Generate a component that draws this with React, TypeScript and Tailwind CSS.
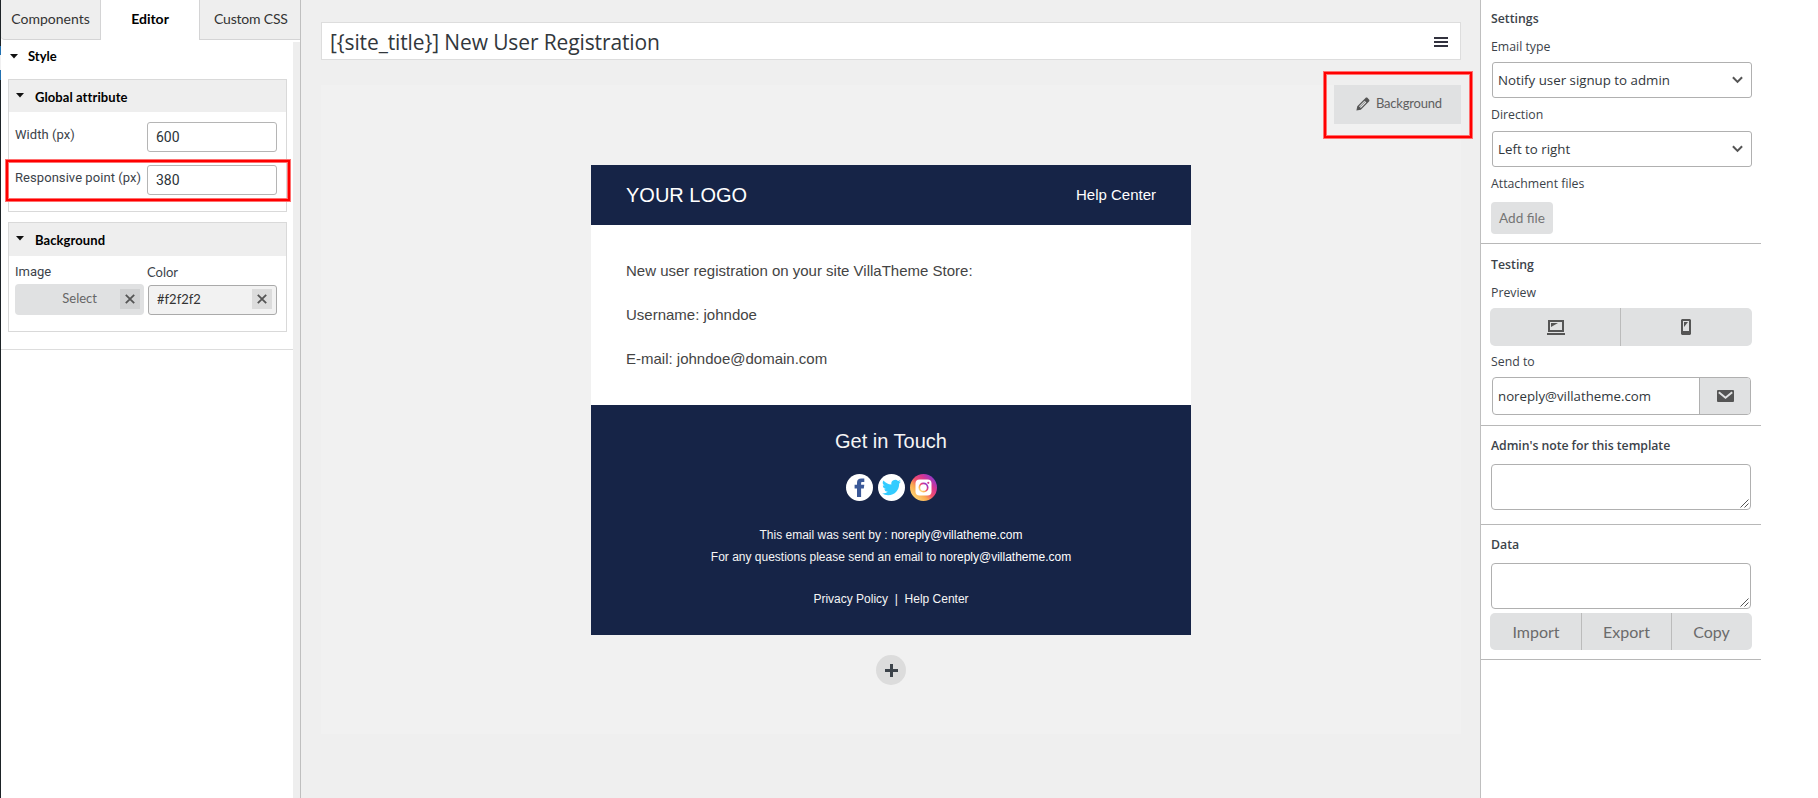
import React from 'react';

const lato = "font-['Lato',sans-serif]";
const roboto = "font-['Roboto',sans-serif]";
const sego = "font-['Open_Sans','Noto_Sans',sans-serif]";

function Caret() {
  return (
    <svg width="8" height="5" viewBox="0 0 8 5" className="shrink-0">
      <path d="M0 0h8L4 4.5z" fill="#111" />
    </svg>
  );
}

function Cross({ className }: { className: string }) {
  return (
    <span className={`flex size-5 items-center justify-center ${className}`}>
      <svg width="10" height="10" viewBox="0 0 10 10">
        <path d="M0.8 0.8L9.2 9.2M9.2 0.8L0.8 9.2" stroke="#555" strokeWidth="1.8" fill="none" />
      </svg>
    </span>
  );
}

function PanelHeading({ title, className }: { title: string; className: string }) {
  return (
    <div className={`flex bg-[#eee] pl-[7px] ${className}`}>
      <span className="mt-[13px] mr-[11px] flex">
        <Caret />
      </span>
      <span className="pt-[1px] text-[13px] leading-8 font-bold tracking-[0.08px] text-black">{title}</span>
    </div>
  );
}

function NumberField({ label, value }: { label: string; value: string }) {
  return (
    <div className={`flex h-[43px] justify-between pr-[9px] pl-1.5 text-[#3c434a] ${roboto}`}>
      <span className="text-[13px] leading-[26px] tracking-[0.06px]">{label}</span>
      <span className="flex h-[30px] w-[130px] items-center rounded-[3px] border border-[#b5b5b5] bg-white pl-[8px] text-[14px] text-[#2c3338]">
        {value}
      </span>
    </div>
  );
}

function Sidebar() {
  return (
    <aside className={`flex h-full w-[301px] border-r border-[#bfbfbf] bg-white ${lato}`}>
      <div className="flex w-px shrink-0 flex-col bg-[#1d2327]">
        <div className="mt-[46px] h-[9px] bg-[#2271b1]" />
        <div className="h-[15px] bg-[#f0f0f1]" />
        <div className="h-[10px] bg-[#2271b1]" />
      </div>
      <div className="flex w-[299px] flex-col">
        <nav className="flex h-10 text-[14px] leading-[38px] text-[#333]">
          <span className="w-[100px] rounded-bl-[4px] border-r border-b border-[#d4d4d5] bg-[#eee] text-center">Components</span>
          <span className="w-[98px] bg-white text-center font-bold text-black">Editor</span>
          <span className="w-[101px] border-b border-l border-[#d4d4d5] bg-[#eee] pl-[14px] tracking-[-0.2px]">Custom CSS</span>
        </nav>
        <div className="flex flex-1">
          <div className="flex w-[292px] flex-col">
            <div className="flex h-[310px] flex-col border-b border-[#ddd] pl-[7px]">
              <div className="flex h-[39px] items-center gap-[10px] pb-[7px] pl-[2px]">
                <Caret />
                <span className="pt-[2px] text-[13px] font-bold text-black">Style</span>
              </div>
              <section className="h-[133px] w-[279px] border border-[#d9d9d9]">
                <PanelHeading title="Global attribute" className="h-8" />
                <div className="pt-[10px]">
                  <NumberField label="Width (px)" value="600" />
                  <NumberField label="Responsive point (px)" value="380" />
                </div>
              </section>
              <section className="mt-[10px] h-[110px] w-[279px] border border-[#d9d9d9]">
                <PanelHeading title="Background" className="h-[33px]" />
                <div className="flex h-7 pt-[6px] pl-1.5 text-[13px] leading-5 text-[#3c434a]">
                  <span className={`w-[132px] ${roboto}`}>Image</span>
                  <span>Color</span>
                </div>
                <div className="flex gap-1 pl-1.5 text-[13px]">
                  <span className="flex h-[31px] w-[129px] items-center justify-end rounded-[4px] bg-[#e0e1e2] pr-1 pb-px text-[#666]">
                    <span className="mr-[23px] pb-px">Select</span>
                    <Cross className="bg-[#d0d1d2]" />
                  </span>
                  <span className="mt-px flex h-[30px] w-[129px] items-center justify-between rounded-[3px] border border-[#aaa] bg-[#f2f2f2] pr-1 pb-[2px] pl-2 text-[#333]">
                    <span className="pt-[2px]">#f2f2f2</span>
                    <Cross className="bg-[#dcdcdc]" />
                  </span>
                </div>
              </section>
            </div>
          </div>
          <div className="mt-[2px] flex-1 bg-[#eee]" />
        </div>
      </div>
    </aside>
  );
}

function SocialIcons() {
  return (
    <div className="flex justify-center gap-[5px]">
      <svg width="27" height="27" viewBox="0 0 27 27">
        <circle cx="13.5" cy="13.5" r="13.5" fill="#fff" />
        <path d="M11 23V14.4H8.6v-3.6H11V8.7c0-2.9 1.7-4.2 4.3-4.2h3v3.4h-1.9c-1 0-1.3.5-1.3 1.4v1.5h3.2l-.5 3.6h-2.7V23z" fill="#3b5998" />
      </svg>
      <svg width="27" height="27" viewBox="0 0 27 27">
        <circle cx="13.5" cy="13.5" r="13.5" fill="#fff" />
        <path transform="translate(4.1 4) scale(.79)" d="M23.95 4.57a10 10 0 0 1-2.82.77 4.96 4.96 0 0 0 2.16-2.72c-.95.55-2 .95-3.13 1.18a4.92 4.92 0 0 0-8.38 4.48C7.69 8.1 4.07 6.13 1.64 3.16a4.92 4.92 0 0 0 1.52 6.57 4.9 4.9 0 0 1-2.23-.61v.06a4.92 4.92 0 0 0 3.95 4.83 5 5 0 0 1-2.21.08 4.94 4.94 0 0 0 4.6 3.42A9.87 9.87 0 0 1 0 19.54a13.99 13.99 0 0 0 7.56 2.21c9.05 0 14-7.5 14-13.98 0-.21 0-.42-.02-.63a9.94 9.94 0 0 0 2.41-2.57z" fill="#33ccff" />
      </svg>
      <svg width="27" height="27" viewBox="0 0 27 27">
        <defs>
          <linearGradient id="insta" x1="0.1" y1="0.85" x2="0.85" y2="0.1">
            <stop offset="0" stopColor="#ffd776" />
            <stop offset="0.3" stopColor="#f9a94f" />
            <stop offset="0.5" stopColor="#f0506e" />
            <stop offset="0.75" stopColor="#d53692" />
            <stop offset="1" stopColor="#8f39ce" />
          </linearGradient>
        </defs>
        <circle cx="13.5" cy="13.5" r="13.5" fill="url(#insta)" />
        <rect x="5.5" y="5.5" width="16" height="16" rx="4" fill="#fff" />
        <circle cx="13.5" cy="13.5" r="4.2" fill="none" stroke="url(#insta)" strokeWidth="1.7" />
        <circle cx="18.3" cy="8.8" r="1.1" fill="#d53692" />
      </svg>
    </div>
  );
}

function EmailPreview() {
  return (
    <article className="mt-[41px] flex w-[600px] flex-col font-['Liberation_Sans',Arial,sans-serif]">
      <header className="flex h-[60px] items-center justify-between bg-[#162447] px-[35px] text-white">
        <span className="text-[20px]">YOUR LOGO</span>
        <span className="text-[15px]">Help Center</span>
      </header>
      <div className="flex h-[180px] flex-col bg-white px-[35px] pt-6 text-[15px] leading-[44px] text-[#444]">
        <p>New user registration on your site VillaTheme Store:</p>
        <p>Username: johndoe</p>
        <p>E-mail: johndoe@domain.com</p>
      </div>
      <footer className="h-[230px] bg-[#162447] text-center text-[#f5f5f5]">
        <h2 className="pt-[21px] pb-[18px] text-[20px] leading-[30px]">Get in Touch</h2>
        <SocialIcons />
        <p className="pt-[23px] text-[12px] leading-[22px]">
          This email was sent by : <span className="text-white">noreply@villatheme.com</span>
        </p>
        <p className="text-[12px] leading-[22px]">
          For any questions please send an email to <span className="text-white">noreply@villatheme.com</span>
        </p>
        <p className="pt-[20px] text-[12px] leading-[22px] whitespace-pre">{'Privacy Policy  |  Help Center'}</p>
      </footer>
    </article>
  );
}

function Canvas() {
  return (
    <main className="flex h-full w-[1179px] flex-col bg-[#efefef] px-5 pt-[22px]">
      <div className={`flex h-[38px] w-[1140px] items-center justify-between border border-[#ddd] bg-white pt-[2px] pr-3 pl-[8px] ${sego}`}>
        <span className="text-[21px] leading-9 tracking-[-0.12px] text-[#32373c]">[{'{site_title}'}] New User Registration</span>
        <span className="flex w-[14px] flex-col gap-[2px]">
          <span className="h-[2px] bg-[#32323e]" />
          <span className="h-[2px] bg-[#32323e]" />
          <span className="h-[2px] bg-[#32323e]" />
        </span>
      </div>
      <div className="mt-[25px] flex h-[649px] w-[1140px] flex-col items-center bg-[#f1f1f1]">
        <div className={`flex h-[39px] w-[127px] items-center gap-[6px] self-end bg-[#e0e1e2] pb-[2px] pl-[22px] text-[13px] tracking-[-0.2px] text-[#5f5f5f] ${lato}`}>
          <svg width="14" height="14" viewBox="0 0 14 14">
            <path d="M0.4 13.6L1.3 9.2L9.5 1C10.1.4 11 .4 11.6 1L13 2.4C13.6 3 13.6 3.9 13 4.5L4.8 12.7z" fill="#555" />
            <path d="M3 9.2L8.5 3.7L10.3 5.5L4.8 11z" fill="#e0e1e2" />
            <path d="M3.6 10.2L9 4.8" stroke="#555" strokeWidth=".6" />
          </svg>
          <span className="pt-px">Background</span>
        </div>
        <EmailPreview />
        <span className="mt-5 flex size-[30px] items-center justify-center rounded-full bg-[#dcdcdc]">
          <svg width="13" height="13" viewBox="0 0 13 13">
            <path d="M5 0h3v5h5v3H8v5H5V8H0V5h5z" fill="#3c434a" />
          </svg>
        </span>
      </div>
    </main>
  );
}

function SelectBox({ value }: { value: string }) {
  return (
    <div className="ml-[1px] flex h-9 w-[260px] items-center justify-between rounded-[3px] border border-[#b0b0b0] bg-white pr-2 pl-[5px] text-[13.3px] text-[#32373c]">
      <span className="pt-px">{value}</span>
      <svg width="11" height="8" viewBox="0 0 11 8">
        <path d="M0.9 1.2L5.5 5.9L10.1 1.2" fill="none" stroke="#555" strokeWidth="2" />
      </svg>
    </div>
  );
}

function NoteArea() {
  return (
    <div className="flex h-[46px] w-[260px] items-end justify-end rounded-[4px] border border-[#b0b0b0] bg-white p-px">
      <svg width="9" height="9" viewBox="0 0 9 9">
        <path d="M0.5 8.5L8.5 0.5M4.5 8.5L8.5 4.5" stroke="#555" strokeWidth="1" fill="none" />
      </svg>
    </div>
  );
}

function SettingsPanel() {
  return (
    <aside className={`flex h-full w-[338px] flex-col border-l border-[#bfbfbf] bg-white text-[12.3px] text-[#3c434a] ${sego}`}>
      <section className="h-[244px] w-[280px] border-b border-[#b8b8b8] pl-[10px]">
        <h3 className="pt-[9px] leading-5 font-semibold">Settings</h3>
        <div className="mt-[8px] mb-[5px] leading-5">Email type</div>
        <SelectBox value="Notify user signup to admin" />
        <div className="mt-[7px] mb-[6px] leading-5">Direction</div>
        <SelectBox value="Left to right" />
        <div className="mt-[7px] mb-[8px] leading-5">Attachment files</div>
        <div className={`flex h-8 w-[62px] items-center justify-center rounded-[4px] bg-[#e0e1e2] text-[13.6px] text-[#757575] ${lato}`}>Add file</div>
      </section>
      <section className="mt-px h-[181px] w-[280px] border-b border-[#b8b8b8] pl-[10px]">
        <h3 className="pt-[10px] leading-5 font-semibold">Testing</h3>
        <div className="mt-[8px] mb-[5px] leading-5">Preview</div>
        <div className="-ml-px flex h-[38px] w-[262px] rounded-[5px] bg-[#e0e1e2]">
          <span className="flex w-[131px] items-center justify-center border-r border-[#bbb] pl-[2px]">
            <svg width="18" height="15" viewBox="0 0 18 15">
              <rect x="2" y="1" width="14" height="10" fill="none" stroke="#555" strokeWidth="2" />
              <path d="M4 3h7L4 7z" fill="#555" />
              <rect x="0" y="13" width="18" height="2" fill="#555" />
            </svg>
          </span>
          <span className="flex flex-1 items-center justify-center pr-[1px]">
            <svg width="10" height="16" viewBox="0 0 10 16">
              <path fillRule="evenodd" d="M1 0h8l1 1v14l-1 1H1l-1-1V1zM2 2v10h6V2z" fill="#555" />
              <path d="M3 3h4L3 8z" fill="#555" />
            </svg>
          </span>
        </div>
        <div className="mt-[6px] mb-[5px] leading-5">Send to</div>
        <div className="ml-px flex h-[38px] w-[259px] overflow-hidden rounded-[4px] border border-[#b0b0b0]">
          <span className="flex w-[207px] items-center border-r border-[#b0b0b0] pt-px pl-[5px] text-[13.25px] text-[#32373c]">noreply@villatheme.com</span>
          <span className="flex flex-1 items-center justify-center bg-[#e0e1e2]">
            <svg width="17" height="12" viewBox="0 0 17 12">
              <rect width="17" height="12" rx="1" fill="#555" />
              <path d="M1.8 2.2L8.5 7.8L15.2 2.2" fill="none" stroke="#e0e1e2" strokeWidth="2" />
            </svg>
          </span>
        </div>
      </section>
      <section className="h-[99px] w-[280px] border-b border-[#b8b8b8] pl-[10px]">
        <h3 className="pt-[10px] pb-[8px] leading-5 font-semibold tracking-[-0.06px]">Admin's note for this template</h3>
        <NoteArea />
      </section>
      <section className="h-[135px] w-[280px] border-b border-[#b8b8b8] pl-[10px]">
        <h3 className="pt-[10px] pb-[8px] leading-5 font-semibold">Data</h3>
        <NoteArea />
        <div className={`mt-[4px] -ml-px flex h-[37px] w-[262px] rounded-[5px] bg-[#e0e1e2] text-center text-[16px] leading-[37px] text-[#6b6b6b] ${lato}`}>
          <span className="w-[92px] border-r border-[#bbb] pl-px">Import</span>
          <span className="w-[90px] border-r border-[#bbb]">Export</span>
          <span className="w-[80px] pr-px">Copy</span>
        </div>
      </section>
    </aside>
  );
}

function Highlight({ className }: { className: string }) {
  return (
    <div className={`absolute border border-[#ff7070] ${className}`}>
      <div className="h-full w-full border-2 border-[#ff0000]">
        <div className="h-full w-full border border-[#ff7070]" />
      </div>
    </div>
  );
}

export default function App() {
  return (
    <div className="relative flex h-[798px] w-[1818px] overflow-hidden bg-white">
      <Sidebar />
      <Canvas />
      <SettingsPanel />
      <Highlight className="top-[159px] left-[5px] h-[43px] w-[286px]" />
      <Highlight className="top-[71px] left-[1323px] h-[68px] w-[150px]" />
    </div>
  );
}
